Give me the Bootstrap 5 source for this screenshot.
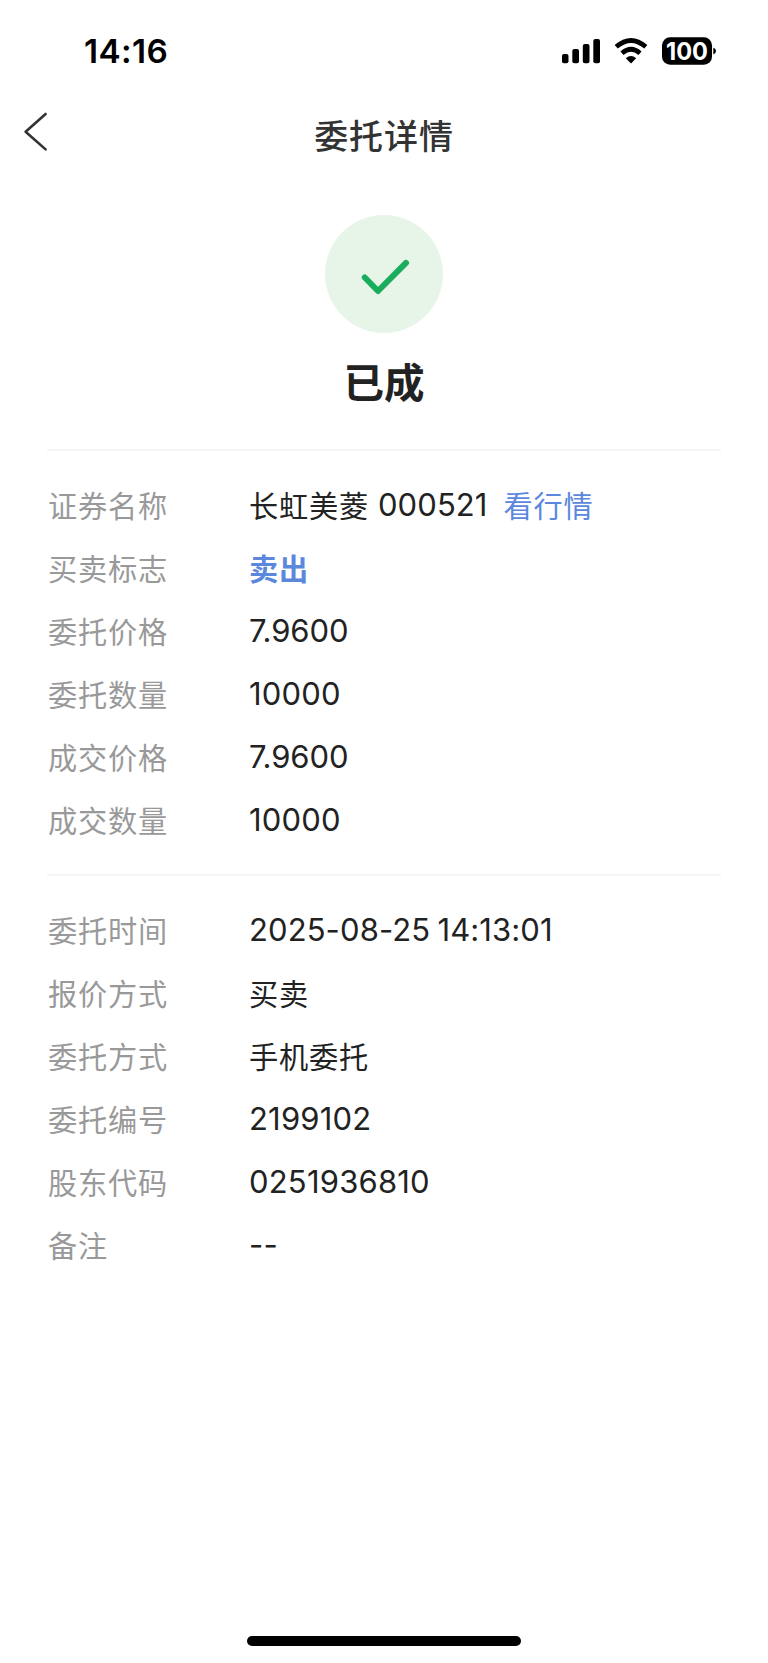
<!DOCTYPE html>
<html lang="zh-CN">
<head>
<meta charset="utf-8">
<meta name="viewport" content="width=device-width, initial-scale=1">
<title>委托详情</title>
<link href="https://cdn.jsdelivr.net/npm/bootstrap@5.3.0/dist/css/bootstrap.min.css" rel="stylesheet">
<style>
body{font-family:"Noto Sans CJK SC",sans-serif;color:#222;background:#fff}
.screen{height:1663px;overflow:hidden}
.num,.clock,.charge{font-family:Inter,sans-serif}
.status-row{height:102px;padding:0 52px 0 84px}
.clock{font-size:33.3px;font-weight:600;line-height:102px;color:#000;letter-spacing:.4px}
.title-row{height:68px}
.title-row h1{font-size:34px;font-weight:500;letter-spacing:.9px;line-height:66px;color:#333}
.back-btn{left:20px;top:8px;line-height:0}
.result{padding-top:45px;height:279px}
.result-mark{width:118px;height:118px;background:#e7f5e9}
.result h2{font-size:40.5px;font-weight:700;line-height:60px;letter-spacing:.1px;margin-top:18px}
.detail-group{margin:0 47px;border-top:2px solid #f5f5f5}
.group-main{height:425px;padding-top:22px}
.group-more{padding-top:22px}
.detail-row{height:62.95px;font-size:29.2px;letter-spacing:.8px;line-height:62px}
.detail-row dt{width:202px;font-weight:400;color:#999;padding-left:1px}
.detail-row .num{font-size:31px;letter-spacing:.2px;line-height:64px}
.detail-row .code{margin-left:9px;letter-spacing:.1px}
.detail-row .price{letter-spacing:-.1px}
.detail-row .stamp{letter-spacing:.1px;word-spacing:-1.5px}
.blue{color:#5b87dc}
.home-bar{width:274px;height:10px;bottom:17px}
</style>
</head>
<body>
<main class="screen position-relative">
  <header>
    <div class="status-row d-flex justify-content-between align-items-center">
      <span class="clock">14:16</span>
      <svg width="156" height="30" viewBox="560 36 156 30" role="img" aria-label="信号与电量">
        <rect x="562" y="54" width="6.5" height="9.3" rx="2"/>
        <rect x="572.3" y="49" width="6.7" height="14.3" rx="2"/>
        <rect x="582.8" y="44" width="6.7" height="19.3" rx="2"/>
        <rect x="593.3" y="39" width="6.7" height="24.3" rx="2"/>
        <path d="M616.2 46.8Q631 34 645.8 46.8M622 53.2Q631 45.4 640 53.2" fill="none" stroke="#000" stroke-width="4.8"/>
        <path d="M625.8 58.2Q631 53.8 636.2 58.2L631 63.4Z"/>
        <rect x="662" y="37.3" width="50" height="27.4" rx="8"/>
        <path d="M713.3 47.5Q716 48.5 716 51Q716 53.5 713.3 54.5Z"/>
        <text class="charge" x="687" y="60" text-anchor="middle" font-size="24.8" font-weight="700" fill="#fff" textLength="42" lengthAdjust="spacingAndGlyphs">100</text>
      </svg>
    </div>
    <nav class="title-row position-relative text-center" aria-label="委托详情">
      <a href="#" class="back-btn position-absolute" aria-label="返回"><svg width="32" height="44" viewBox="20 110 32 44" fill="none" stroke="#333" stroke-width="2.6" stroke-linecap="round" stroke-linejoin="round"><path d="M45.6 114L25.6 131.7L45.6 149.4"/></svg></a>
      <h1 class="m-0">委托详情</h1>
    </nav>
  </header>
  <section class="result text-center">
    <div class="result-mark rounded-circle mx-auto"><svg class="d-block" width="118" height="118" viewBox="325 215 118 118" fill="none" stroke="#1aad5c" stroke-width="6" stroke-linecap="round" stroke-linejoin="round"><path d="M364.8 277.5L378 291L406 262.9"/></svg></div>
    <h2 class="mb-0">已成</h2>
  </section>
  <dl class="detail-group group-main mb-0">
    <div class="detail-row d-flex"><dt>证券名称</dt><dd class="m-0 d-flex">长虹美菱<span class="num code">000521</span><a href="#" class="blue text-decoration-none ms-3">看行情</a></dd></div>
    <div class="detail-row d-flex"><dt>买卖标志</dt><dd class="m-0 fw-bold blue">卖出</dd></div>
    <div class="detail-row d-flex"><dt>委托价格</dt><dd class="m-0 num price">7.9600</dd></div>
    <div class="detail-row d-flex"><dt>委托数量</dt><dd class="m-0 num">10000</dd></div>
    <div class="detail-row d-flex"><dt>成交价格</dt><dd class="m-0 num price">7.9600</dd></div>
    <div class="detail-row d-flex"><dt>成交数量</dt><dd class="m-0 num">10000</dd></div>
  </dl>
  <dl class="detail-group group-more mb-0">
    <div class="detail-row d-flex"><dt>委托时间</dt><dd class="m-0 num stamp">2025-08-25 14:13:01</dd></div>
    <div class="detail-row d-flex"><dt>报价方式</dt><dd class="m-0">买卖</dd></div>
    <div class="detail-row d-flex"><dt>委托方式</dt><dd class="m-0">手机委托</dd></div>
    <div class="detail-row d-flex"><dt>委托编号</dt><dd class="m-0 num">2199102</dd></div>
    <div class="detail-row d-flex"><dt>股东代码</dt><dd class="m-0 num">0251936810</dd></div>
    <div class="detail-row d-flex"><dt>备注</dt><dd class="m-0 num">--</dd></div>
  </dl>
  <div class="home-bar position-absolute start-50 translate-middle-x bg-black rounded-pill"></div>
</main>
<script src="https://cdn.jsdelivr.net/npm/bootstrap@5.3.0/dist/js/bootstrap.bundle.min.js"></script>
</body>
</html>
